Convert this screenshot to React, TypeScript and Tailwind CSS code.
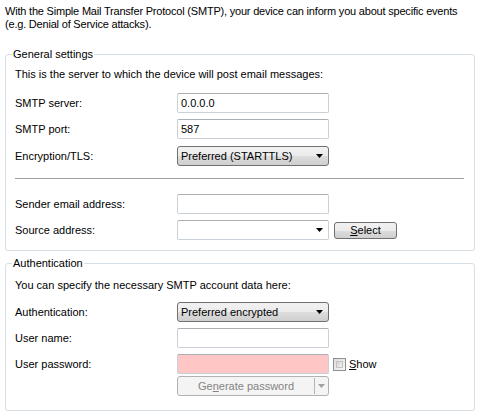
import React from 'react';

const inputCls = 'h-[20px] w-[152px] border border-[#c9d0d8] border-t-[#abadb3] rounded-[2px] px-[3px] flex items-center';

const Arrow: React.FC<{ color?: string }> = ({ color = '#000' }) => (
  <svg width="7" height="4" viewBox="0 0 7 4" className="shrink-0">
    <path d="M0 0h7L3.5 4z" fill={color} />
  </svg>
);

const Row: React.FC<{ label: string; children: React.ReactNode; className?: string }> = ({ label, children, className = '' }) => (
  <div className={`flex items-center h-[20px] ${className}`}>
    <div className="w-[162px] shrink-0">{label}</div>
    {children}
  </div>
);

const ComboButton: React.FC<{ value: string }> = ({ value }) => (
  <div className="h-[20px] w-[152px] border border-[#707070] rounded-[3px] bg-[linear-gradient(#f2f2f2_0%,#ebebeb_50%,#dddddd_50%,#cfcfcf_100%)] pl-[3px] pr-[5px] flex items-center justify-between">
    <span>{value}</span>
    <Arrow />
  </div>
);

const GroupBox: React.FC<{ title: string; className?: string; children: React.ReactNode }> = ({ title, className = '', children }) => (
  <fieldset className={`mx-[5px] border border-[#d5dfe5] rounded-[3px] pl-[9px] pr-[10px] ${className}`}>
    <legend className="-ml-[3px] px-[1px] leading-[13px]">{title}</legend>
    {children}
  </fieldset>
);

export default function App() {
  return (
    <div className="w-[480px] h-[418px] bg-white text-black text-[11px] leading-[13px] font-['Liberation_Sans',Arial,sans-serif] overflow-hidden">
      <p className="pl-[5px] pt-[5px] whitespace-nowrap tracking-[-0.2px]">
        With the Simple Mail Transfer Protocol (SMTP), your device can inform you about specific events
        <br />
        (e.g. Denial of Service attacks).
      </p>

      <GroupBox title="General settings" className="mt-[17px] pb-[10px]">
        <p className="mt-[7px]">This is the server to which the device will post email messages:</p>
        <Row label="SMTP server:" className="mt-[12px]">
          <div className={`${inputCls} bg-white`}>0.0.0.0</div>
        </Row>
        <Row label="SMTP port:" className="mt-[6px]">
          <div className={`${inputCls} bg-white`}>587</div>
        </Row>
        <Row label="Encryption/TLS:" className="mt-[7px]">
          <ComboButton value="Preferred (STARTTLS)" />
        </Row>
        <div className="mt-[12px] h-[1px] bg-[#a0a0a0]" />
        <Row label="Sender email address:" className="mt-[15px]">
          <div className={`${inputCls} bg-white`} />
        </Row>
        <Row label="Source address:" className="mt-[6px]">
          <div className={`${inputCls} bg-white justify-end pr-[5px]`}>
            <Arrow />
          </div>
          <button className="ml-[5px] h-[17px] w-[63px] border border-[#707070] rounded-[3px] bg-[linear-gradient(#f2f2f2_0%,#ebebeb_50%,#dddddd_50%,#cfcfcf_100%)] leading-[13px]">
            <span className="underline underline-offset-[1px]">S</span>elect
          </button>
        </Row>
      </GroupBox>

      <GroupBox title="Authentication" className="mt-[6px] pb-[14px]">
        <p className="mt-[9px]">You can specify the necessary SMTP account data here:</p>
        <Row label="Authentication:" className="mt-[10px]">
          <ComboButton value="Preferred encrypted" />
        </Row>
        <Row label="User name:" className="mt-[6px]">
          <div className={`${inputCls} bg-white`} />
        </Row>
        <Row label="User password:" className="mt-[6px]">
          <div className={`${inputCls} bg-[#ffc6c6]`} />
          <div className="ml-[4px] w-[13px] h-[13px] border border-[#8e8f8f] bg-[linear-gradient(135deg,#dcdcdc,#f8f8f8)] p-[2px]">
            <div className="w-full h-full border border-[#c4c4c4] bg-[linear-gradient(135deg,#d2d2d2,#f4f4f4)]" />
          </div>
          <span className="ml-[3px]">
            <span className="underline underline-offset-[1px]">S</span>how
          </span>
        </Row>
        <div className="flex mt-[2px]">
          <div className="w-[162px] shrink-0" />
          <div className="h-[20px] w-[152px] border border-[#adb2b5] rounded-[3px] bg-[#f4f4f4] text-[#838383] flex items-center">
            <div className="flex-1 text-center">
              Ge<span className="underline underline-offset-[1px]">n</span>erate password
            </div>
            <div className="w-[1px] h-[16px] bg-[#b5b5b5]" />
            <div className="w-[13px] flex justify-center">
              <Arrow color="#a0a0a0" />
            </div>
          </div>
        </div>
      </GroupBox>
    </div>
  );
}
